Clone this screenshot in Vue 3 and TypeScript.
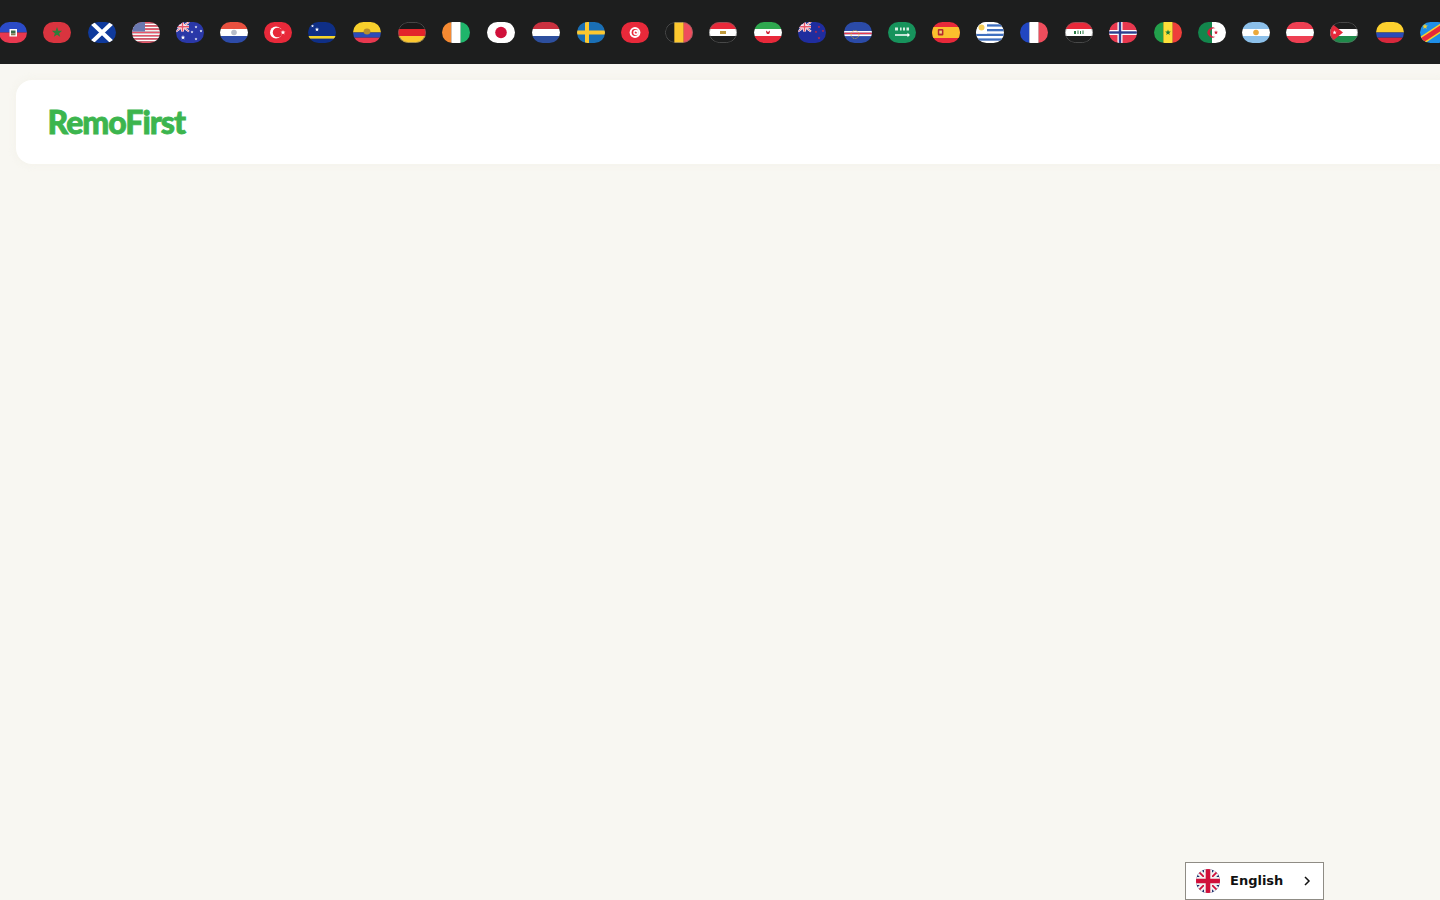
<script setup lang="ts">
interface Flag {
  name: string
  art: string
  extra?: number
}

// horizontal bands, top to bottom
const bands = (...colors: string[]) => {
  const h = 21 / colors.length
  return colors.map((c, i) => `<rect y="${i * h}" width="28" height="${h + 0.1}" fill="${c}"/>`).join('')
}

// vertical bands, left to right
const columns = (...colors: string[]) => {
  const w = 28 / colors.length
  return colors.map((c, i) => `<rect x="${i * w}" width="${w + 0.1}" height="21" fill="${c}"/>`).join('')
}

const star = (x: number, y: number, r: number, fill: string) => {
  const pts: string[] = []
  for (let i = 0; i < 10; i++) {
    const rad = i % 2 === 0 ? r : r * 0.42
    const a = -Math.PI / 2 + (i * Math.PI) / 5
    pts.push(`${(x + rad * Math.cos(a)).toFixed(2)},${(y + rad * Math.sin(a)).toFixed(2)}`)
  }
  return `<polygon points="${pts.join(' ')}" fill="${fill}"/>`
}

// dark flags get a thin grey edge so they stay visible on the bar
const outline = '<rect x=".35" y=".35" width="27.3" height="20.3" rx="10" fill="none" stroke="#666" stroke-width=".7"/>'

const unionCorner = `<rect width="13" height="9.5" fill="#2b3a9a"/>
  <path d="M0 0l13 9.5M13 0L0 9.5" stroke="#fff" stroke-width="2"/>
  <path d="M0 0l13 9.5M13 0L0 9.5" stroke="#e8566a" stroke-width=".8"/>
  <path d="M6.5 0v9.5M0 4.75h13" stroke="#fff" stroke-width="3"/>
  <path d="M6.5 0v9.5M0 4.75h13" stroke="#e8566a" stroke-width="1.6"/>`

const usStripes = Array.from({ length: 13 }, (_, i) =>
  `<rect y="${(i * 21) / 13}" width="28" height="1.7" fill="${i % 2 ? '#fff' : '#e8566a'}"/>`
).join('')

const flags: Flag[] = [
  { name: 'Haiti', art: bands('#2b4bc8', '#e8384f') + '<rect x="10.5" y="7" width="7.5" height="7.5" fill="#fff"/><rect x="12" y="8.5" width="4.5" height="3" fill="#3a6b4a"/><rect x="12" y="11.5" width="4.5" height="1.8" fill="#8a7a50"/>' },
  { name: 'Morocco', art: '<rect width="28" height="21" fill="#d9343f"/>' + star(14, 10.5, 5.4, '#2f7d3a'), extra: 0.3 },
  { name: 'Scotland', art: '<rect width="28" height="21" fill="#0f3a9c"/><path d="M3 0l22 21M25 0L3 21" stroke="#fff" stroke-width="4"/>', extra: 1 },
  { name: 'USA', art: usStripes + '<rect width="13" height="9.5" fill="#6a78b0"/>' },
  { name: 'Australia', art: '<rect width="28" height="21" fill="#2a38a8"/>' + unionCorner + star(7, 15.5, 2.4, '#fff') + star(20, 5, 1.5, '#fff') + star(25, 9, 1.5, '#fff') + star(20, 17, 1.5, '#fff') + star(16, 10, 1.5, '#fff') },
  { name: 'Paraguay', art: bands('#e8503f', '#fff', '#2d4ba8') + '<circle cx="14" cy="10.5" r="2.8" fill="#b7bdc9"/>' },
  { name: 'Turkey', art: '<rect width="28" height="21" fill="#e8293a"/><circle cx="12" cy="10.5" r="6" fill="#fff"/><circle cx="13.6" cy="10.5" r="4.8" fill="#e8293a"/>' + star(19, 10.5, 2.6, '#fff') },
  { name: 'Curacao', art: '<rect width="28" height="21" fill="#0f2f86"/><rect y="14" width="28" height="2.6" fill="#f5d428"/>' + star(4.5, 4, 1.6, '#fff') + star(9, 7.5, 2.2, '#fff') },
  { name: 'Ecuador', art: '<rect width="28" height="10.5" fill="#f7d02c"/><rect y="10.5" width="28" height="5.2" fill="#2b4bb8"/><rect y="15.7" width="28" height="5.3" fill="#e8384f"/><ellipse cx="14" cy="9.5" rx="3.4" ry="3" fill="#b78f2c"/>', extra: 0.7 },
  { name: 'Germany', art: bands('#1a1a1a', '#e3242b', '#fdc82f') + outline, extra: 1 },
  { name: 'Ivory Coast', art: columns('#f68a32', '#fff', '#1fb56b'), extra: 0.6 },
  { name: 'Japan', art: '<rect width="28" height="21" fill="#fff"/><circle cx="14" cy="10.5" r="5.8" fill="#d0103a"/>', extra: 1 },
  { name: 'Netherlands', art: bands('#c9313f', '#fff', '#2d4f9e'), extra: 1 },
  { name: 'Sweden', art: '<rect width="28" height="21" fill="#1a6fb5"/><rect x="8" width="4" height="21" fill="#fdc82f"/><rect y="8.5" width="28" height="4" fill="#fdc82f"/>', extra: 0.4 },
  { name: 'Tunisia', art: '<rect width="28" height="21" fill="#e8293a"/><circle cx="14" cy="10.5" r="5.4" fill="#fff"/><circle cx="14" cy="10.5" r="3.4" fill="#e8293a"/><circle cx="15" cy="10.5" r="2.7" fill="#fff"/>' + star(14.8, 10.5, 1.6, '#e8293a') },
  { name: 'Belgium', art: columns('#1d1e1e', '#fdc82f', '#ef4d5c') + outline, extra: 0.3 },
  { name: 'Egypt', art: bands('#e8293a', '#fff', '#1d1e1e') + '<rect x="11" y="9" width="6" height="3" fill="#c09a3c"/>' + outline, extra: 0.3 },
  { name: 'Iran', art: bands('#2fa84f', '#fff', '#e8293a') + '<path d="M12 8.5c0 3 1 3.5 2 3.5s2-.5 2-3.5l-2 1.5z" fill="#d0283a"/>', extra: 0.7 },
  { name: 'New Zealand', art: '<rect width="28" height="21" fill="#1f2d9f"/>' + unionCorner + star(21, 5, 1.4, '#d0283a') + star(25, 9, 1.4, '#d0283a') + star(18, 10, 1.4, '#d0283a') + star(21, 16, 1.6, '#d0283a'), extra: 0.3 },
  { name: 'Cape Verde', art: '<rect width="28" height="21" fill="#2b4ba8"/><rect y="9" width="28" height="1.7" fill="#fff"/><rect y="10.7" width="28" height="1.7" fill="#e8384f"/><rect y="12.4" width="28" height="1.7" fill="#fff"/><circle cx="11" cy="12.5" r="4" fill="none" stroke="#d9b52c" stroke-width=".9" stroke-dasharray="1 .8"/>', extra: 1.7 },
  { name: 'Saudi Arabia', art: '<rect width="28" height="21" fill="#17935c"/><path d="M7 5.5h3v3H7zM12 5.5h1.6v3H12zM15 5.5h2v3h-2zM18.5 5.5h2.5v3h-2.5z" fill="#d7efe3"/><path d="M7 13h13" stroke="#fff" stroke-width="1.3"/><path d="M19.5 10.8v4.4l2.5-2.2z" fill="#fff"/>' },
  { name: 'Spain', art: '<rect width="28" height="21" fill="#e8293a"/><rect y="5" width="28" height="11" fill="#fbc02d"/><rect x="5.8" y="7" width="5.6" height="6.6" rx="1" fill="#b5272f"/><rect x="7.3" y="8.6" width="2.6" height="3" fill="#f1d37a"/>' },
  { name: 'Uruguay', art: '<rect width="28" height="21" fill="#fff"/><rect y="2.3" width="28" height="2.3" fill="#3f6fbf"/><rect y="7" width="28" height="2.3" fill="#3f6fbf"/><rect y="11.7" width="28" height="2.3" fill="#3f6fbf"/><rect y="16.4" width="28" height="2.3" fill="#3f6fbf"/><rect width="11" height="11.7" fill="#fff"/><circle cx="5.5" cy="5.5" r="3" fill="#f5cf5a"/>' },
  { name: 'France', art: columns('#2146c0', '#fff', '#ef4d5c'), extra: 0.3 },
  { name: 'Iraq', art: bands('#e8293a', '#fff', '#1d1e1e') + '<path d="M9 9h2v3H9zM12.5 8.5h1v3.5h-1zM15 9h1v3h-1zM17.5 8.5h1v3.5h-1z" fill="#2a7a45"/>' + outline, extra: 0.4 },
  { name: 'Norway', art: '<rect width="28" height="21" fill="#e8384f"/><rect x="8.5" width="5" height="21" fill="#fff"/><rect y="8" width="28" height="5" fill="#fff"/><rect x="9.8" width="2.4" height="21" fill="#2d3f8f"/><rect y="9.3" width="28" height="2.4" fill="#2d3f8f"/>', extra: 0.3 },
  { name: 'Senegal', art: columns('#22a04b', '#fde03a', '#ef3e3a') + star(14, 10.5, 3, '#177a3a'), extra: 0.7 },
  { name: 'Algeria', art: '<rect width="14" height="21" fill="#13864c"/><rect x="14" width="14" height="21" fill="#fff"/><path d="M17.5 6.5A5 5 0 1 0 17.5 14.5A4.2 4.2 0 1 1 17.5 6.5z" fill="#d0203a"/>' + star(18, 10.5, 2.2, '#d0203a'), extra: 0.3 },
  { name: 'Argentina', art: bands('#8cc0ea', '#fff', '#8cc0ea') + '<circle cx="14" cy="10.5" r="2.8" fill="#eba93c"/>' },
  { name: 'Austria', art: bands('#ee3f52', '#fff', '#ee3f52') },
  { name: 'Jordan', art: bands('#1d1e1e', '#fff', '#1f8a4a') + '<path d="M0 0l13 10.5L0 21z" fill="#e8293a"/>' + star(4.6, 10.5, 2.2, '#fff') + outline },
  { name: 'Colombia', art: '<rect width="28" height="10.5" fill="#fdd12e"/><rect y="10.5" width="28" height="5.2" fill="#2b4bb8"/><rect y="15.7" width="28" height="5.3" fill="#d8283c"/>', extra: 1.7 },
  { name: 'DR Congo', art: '<rect width="28" height="21" fill="#1f8fe8"/><path d="M-2 21L30 0" stroke="#f7d02c" stroke-width="8"/><path d="M-2 21L30 0" stroke="#e8293a" stroke-width="5"/>' + star(5, 4.5, 3, '#f7d02c'), extra: 0.3 }
]
</script>

<template>
  <div class="page">
    <div class="flag-bar">
      <div class="flag-track">
        <span
          v-for="flag in flags"
          :key="flag.name"
          class="flag"
          :title="flag.name"
          :style="{ marginLeft: (flag.extra ?? 0) + 'px' }"
        >
          <svg viewBox="0 0 28 21" width="28" height="21" v-html="flag.art"></svg>
        </span>
      </div>
    </div>

    <header class="nav-card">
      <span class="logo">RemoFirst</span>
    </header>

    <button class="lang-switch" type="button">
      <svg class="lang-flag" viewBox="0 0 24 24" width="24" height="24">
        <defs>
          <clipPath id="lang-circle"><circle cx="12" cy="12" r="12" /></clipPath>
        </defs>
        <g clip-path="url(#lang-circle)">
          <rect width="24" height="24" fill="#1f2f6e" />
          <path d="M0 0l24 24M24 0L0 24" stroke="#f2f2f2" stroke-width="6" />
          <path d="M0 0l24 24M24 0L0 24" stroke="#d0103a" stroke-width="1.8" />
          <path d="M12 0v24M0 12h24" stroke="#f2f2f2" stroke-width="8" />
          <path d="M12 0v24M0 12h24" stroke="#d0103a" stroke-width="4.6" />
        </g>
      </svg>
      <span class="lang-name">English</span>
      <svg class="lang-arrow" viewBox="0 0 10 12" width="10" height="12">
        <path d="M3 2l4 4-4 4" fill="none" stroke="#111" stroke-width="1.5" />
      </svg>
    </button>
  </div>
</template>

<style scoped>
.page {
  min-height: 900px;
  background: #f8f7f2;
  overflow: hidden;
}

.flag-bar {
  height: 64px;
  background: #1d1e1e;
  display: flex;
  align-items: center;
  overflow: hidden;
}

.flag-track {
  display: flex;
  gap: 16px;
  margin-left: -1.3px;
}

.flag {
  flex: none;
  display: block;
  width: 28px;
  height: 21px;
  border-radius: 10.5px;
  overflow: hidden;
}

.flag svg {
  display: block;
}

.nav-card {
  margin: 16px 0 0 16px;
  width: 100%;
  height: 84px;
  box-sizing: border-box;
  padding-left: 31.5px;
  display: flex;
  align-items: center;
  background: #fff;
  border-radius: 16px;
  box-shadow: 0 0 8px rgba(240, 238, 228, 0.6);
}

.logo {
  font-family: "Lato", "Liberation Sans", sans-serif;
  font-size: 32px;
  font-weight: 900;
  letter-spacing: -1px;
  -webkit-text-stroke: 0.8px #3cb54e;
  color: #3cb54e;
  line-height: 1;
}

.lang-switch {
  position: fixed;
  right: 116px;
  bottom: 0;
  width: 139px;
  height: 38px;
  box-sizing: border-box;
  display: flex;
  align-items: center;
  padding: 0 11px 0 10px;
  background: #fff;
  border: 1px solid #8f8c85;
  font-family: "DejaVu Sans", sans-serif;
  font-size: 13px;
  font-weight: 700;
  color: #111;
}

.lang-name {
  margin: 0 0 2px 10px;
}

.lang-arrow {
  margin-left: auto;
}
</style>

<style>
body {
  background: #f8f7f2;
}
</style>
